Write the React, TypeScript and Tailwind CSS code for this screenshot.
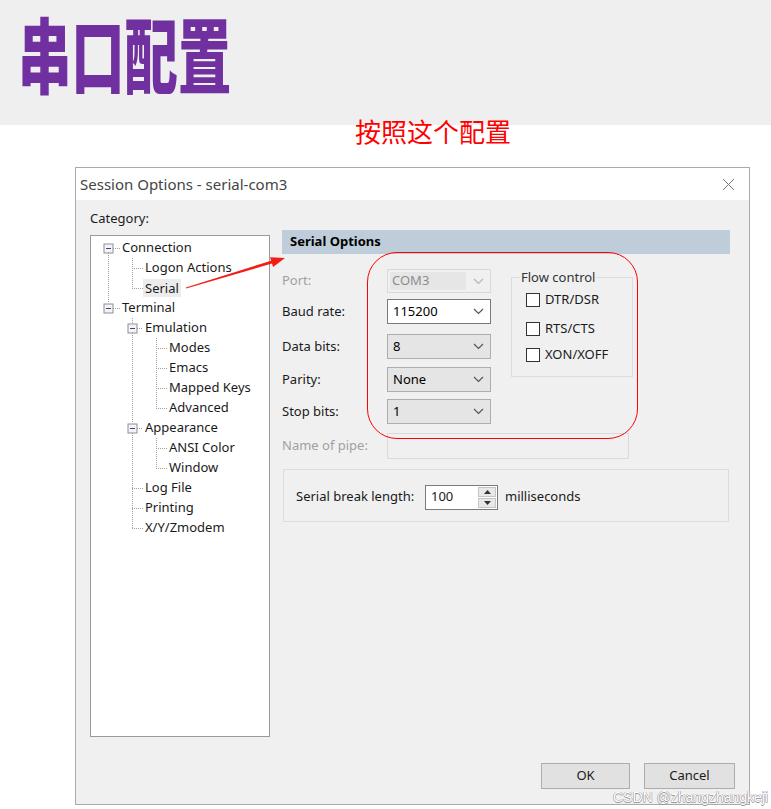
import React from "react";

type Row = { label: string; level: 0 | 1 | 2; selected?: boolean };

const treeRows: Row[] = [
  { label: "Connection", level: 0 },
  { label: "Logon Actions", level: 1 },
  { label: "Serial", level: 1, selected: true },
  { label: "Terminal", level: 0 },
  { label: "Emulation", level: 1 },
  { label: "Modes", level: 2 },
  { label: "Emacs", level: 2 },
  { label: "Mapped Keys", level: 2 },
  { label: "Advanced", level: 2 },
  { label: "Appearance", level: 1 },
  { label: "ANSI Color", level: 2 },
  { label: "Window", level: 2 },
  { label: "Log File", level: 1 },
  { label: "Printing", level: 1 },
  { label: "X/Y/Zmodem", level: 1 },
];

const indent = ["pl-[31px]", "pl-[54px]", "pl-[78px]"];

// row center y inside the tree box
const cy = (i: number) => 12 + 20 * i;

function TreeLines() {
  const v = (x: number, y1: number, y2: number) => `M${x + 0.5} ${y1}V${y2}`;
  const h = (y: number, x1: number, x2: number) => `M${x1} ${y + 0.5}H${x2}`;
  const d = [
    v(17, cy(0) + 5, cy(3) - 5),
    h(cy(0), 22, 29),
    h(cy(3), 22, 29),
    v(41, cy(0) + 10, cy(2)),
    h(cy(1), 41, 52),
    h(cy(2), 41, 52),
    v(41, cy(3) + 10, cy(4) - 5),
    v(41, cy(4) + 5, cy(9) - 5),
    v(41, cy(9) + 5, cy(14)),
    h(cy(4), 46, 52),
    h(cy(9), 46, 52),
    h(cy(12), 41, 52),
    h(cy(13), 41, 52),
    h(cy(14), 41, 52),
    v(65, cy(4) + 10, cy(8)),
    h(cy(5), 65, 76),
    h(cy(6), 65, 76),
    h(cy(7), 65, 76),
    h(cy(8), 65, 76),
    v(65, cy(9) + 10, cy(11)),
    h(cy(10), 65, 76),
    h(cy(11), 65, 76),
  ].join(" ");
  const boxes = [
    [17, cy(0)],
    [17, cy(3)],
    [41, cy(4)],
    [41, cy(9)],
  ];
  return (
    <svg className="pointer-events-none absolute left-0 top-0" width="178" height="320">
      <path d={d} stroke="#a0a0a0" strokeWidth="1" strokeDasharray="1 1" fill="none" />
      {boxes.map(([x, y], i) => (
        <g key={i}>
          <rect x={x - 4} y={y - 4} width="9" height="9" fill="#f4f4f4" stroke="#8f8f8f" />
          <path d={`M${x - 2} ${y + 0.5}H${x + 3}`} stroke="#2b4a8a" strokeWidth="1" />
        </g>
      ))}
    </svg>
  );
}

function Chevron({ color }: { color: string }) {
  return (
    <svg width="11" height="7" viewBox="0 0 11 7">
      <path d="M1 1l4.5 4.5L10 1" fill="none" stroke={color} strokeWidth="1.2" />
    </svg>
  );
}

function ComboBox({ value, kind }: { value: string; kind: "disabled" | "focus" | "normal" }) {
  const box =
    kind === "disabled"
      ? "border-[#d9d9d9] bg-[#f0f0f0]"
      : kind === "focus"
      ? "border-[#7a7a7a] bg-white"
      : "border-[#adadad] bg-[#e5e5e5]";
  return (
    <div className={`flex h-full w-[104px] items-center border ${box}`}>
      {kind === "disabled" ? (
        <div className="ml-[2px] flex h-[18px] flex-1 items-center bg-[#e6e6e6] pl-[2px] text-[#8d8d8d]">{value}</div>
      ) : (
        <div className="flex-1 pl-[5px] text-black">{value}</div>
      )}
      <div className="flex w-[24px] justify-center">
        <Chevron color={kind === "disabled" ? "#b5b5b5" : "#555"} />
      </div>
    </div>
  );
}

function FormRow({ label, mt, h, disabled, children }: { label: string; mt: string; h: string; disabled?: boolean; children: React.ReactNode }) {
  return (
    <div className={`flex items-center ${mt} ${h}`}>
      <div className={`w-[105px] ${disabled ? "text-[#a0a0a0]" : "text-[#1a1a1a]"}`}>{label}</div>
      {children}
    </div>
  );
}

function Check({ label, mt }: { label: string; mt: string }) {
  return (
    <div className={`flex h-[20px] items-center gap-[5px] pl-[14px] ${mt}`}>
      <div className="h-[14px] w-[14px] border border-[#333] bg-white" />
      <span>{label}</span>
    </div>
  );
}

export default function App() {
  return (
    <div className="relative h-[809px] w-[771px] overflow-hidden bg-white">
      <div className="h-[125px] bg-[#efefef] pl-[18px] pt-[11px]">
        <h1 className="origin-left scale-x-[0.65] whitespace-nowrap font-['Noto_Sans_CJK_SC',sans-serif] text-[82px] font-black leading-none text-[#7030a0]">
          串口配置
        </h1>
      </div>
      <div className="-mt-[7px] pl-[355px] font-['Noto_Sans_CJK_SC',sans-serif] text-[26px] leading-none text-[#f00]">
        按照这个配置
      </div>

      <div className="ml-[75px] mt-[23px] flex h-[638px] w-[675px] flex-col border border-[#aaaaaa] font-['Noto_Sans','Open_Sans',sans-serif]">
        <div className="flex h-[32px] items-center justify-between bg-white pl-[4px] pr-[14px] text-[15px] text-[#444]">
          <span>Session Options - serial-com3</span>
          <svg width="13" height="13" viewBox="0 0 13 13">
            <path d="M1 1l11 11M12 1L1 12" stroke="#777" strokeWidth="1" />
          </svg>
        </div>

        <div className="flex flex-1 flex-col bg-[#f0f0f0] px-[14px] pb-[15px] text-[13px] text-[#1a1a1a]">
          <div className="flex">
            <div className="w-[180px] pt-[8px]">
              <div className="h-[20px] leading-[20px]">Category:</div>
              <div className="relative mt-[7px] h-[502px] border border-[#9a9a9a] bg-white pt-[2px]">
                <TreeLines />
                {treeRows.map((r) => (
                  <div key={r.label} className={`flex h-[20px] items-center ${indent[r.level]}`}>
                    {r.selected ? (
                      <span className="-ml-[2px] bg-[#ececec] px-[2px] leading-[18px]">{r.label}</span>
                    ) : (
                      <span>{r.label}</span>
                    )}
                  </div>
                ))}
              </div>
            </div>

            <div className="ml-[12px] w-[448px] pt-[30px]">
              <div className="flex h-[24px] items-center bg-[#bfcddb] pl-[8px] font-bold text-black">Serial Options</div>
              <div className="flex">
                <div>
                  <FormRow label="Port:" mt="mt-[15px]" h="h-[24px]" disabled>
                    <ComboBox value="COM3" kind="disabled" />
                  </FormRow>
                  <FormRow label="Baud rate:" mt="mt-[6px]" h="h-[25px]">
                    <ComboBox value="115200" kind="focus" />
                  </FormRow>
                  <FormRow label="Data bits:" mt="mt-[10px]" h="h-[25px]">
                    <ComboBox value="8" kind="normal" />
                  </FormRow>
                  <FormRow label="Parity:" mt="mt-[8px]" h="h-[25px]">
                    <ComboBox value="None" kind="normal" />
                  </FormRow>
                  <FormRow label="Stop bits:" mt="mt-[7px]" h="h-[25px]">
                    <ComboBox value="1" kind="normal" />
                  </FormRow>
                </div>
                <fieldset className="ml-[20px] mt-[14px] w-[122px] self-start border border-[#dcdcdc] pb-[11px]">
                  <legend className="ml-[8px] px-[1px] leading-[18px] text-[#333]">Flow control</legend>
                  <Check label="DTR/DSR" mt="mt-[4px]" />
                  <Check label="RTS/CTS" mt="mt-[9px]" />
                  <Check label="XON/XOFF" mt="mt-[6px]" />
                </fieldset>
              </div>
              <FormRow label="Name of pipe:" mt="mt-[9px]" h="h-[26px]" disabled>
                <div className="h-full w-[242px] border border-[#dadada] bg-[#f0f0f0]" />
              </FormRow>
              <div className="ml-[1px] mt-[10px] flex h-[53px] w-[446px] items-center border border-[#dcdcdc] pl-[12px] pt-[3px]">
                <span className="w-[129px]">Serial break length:</span>
                <div className="flex h-[25px] w-[73px] border border-[#7a7a7a] bg-white">
                  <div className="flex flex-1 items-center pl-[5px]">100</div>
                  <div className="flex w-[20px] flex-col gap-[1px] p-[1px]">
                    <div className="flex flex-1 items-center justify-center border border-[#c4c4c4] bg-[#e8e8e8]">
                      <svg width="7" height="4" viewBox="0 0 7 4"><path d="M0 4L3.5 0L7 4Z" fill="#333" /></svg>
                    </div>
                    <div className="flex flex-1 items-center justify-center border border-[#c4c4c4] bg-[#e8e8e8]">
                      <svg width="7" height="4" viewBox="0 0 7 4"><path d="M0 0L3.5 4L7 0Z" fill="#333" /></svg>
                    </div>
                  </div>
                </div>
                <span className="ml-[7px]">milliseconds</span>
              </div>
            </div>
          </div>

          <div className="mt-auto flex justify-end gap-[14px]">
            <button className="h-[26px] w-[89px] border border-[#adadad] bg-[#e1e1e1]">OK</button>
            <button className="h-[26px] w-[91px] border border-[#adadad] bg-[#e1e1e1]">Cancel</button>
          </div>
        </div>
      </div>

      {/* annotations drawn over the screenshot */}
      <div className="pointer-events-none absolute left-[367px] top-[252px] h-[187px] w-[271px] rounded-[30px] border-[1.5px] border-[#f00]" />
      <svg className="pointer-events-none absolute left-0 top-0" width="771" height="809">
        <polygon
          points="185.9,287.6 271.2,260.7 270.1,257.3 285,258 273.1,266.9 272,263.5 186.1,288.4"
          fill="#f21d14"
        />
      </svg>
      <div className="pointer-events-none absolute left-[613px] top-[787px] font-['Liberation_Sans',sans-serif] text-[14px] text-white [text-shadow:-0.5px_0_#999,0.5px_0_#999,0_0.5px_#999,0_-0.5px_#999]">
        CSDN @zhangzhangkeji
      </div>
    </div>
  );
}
